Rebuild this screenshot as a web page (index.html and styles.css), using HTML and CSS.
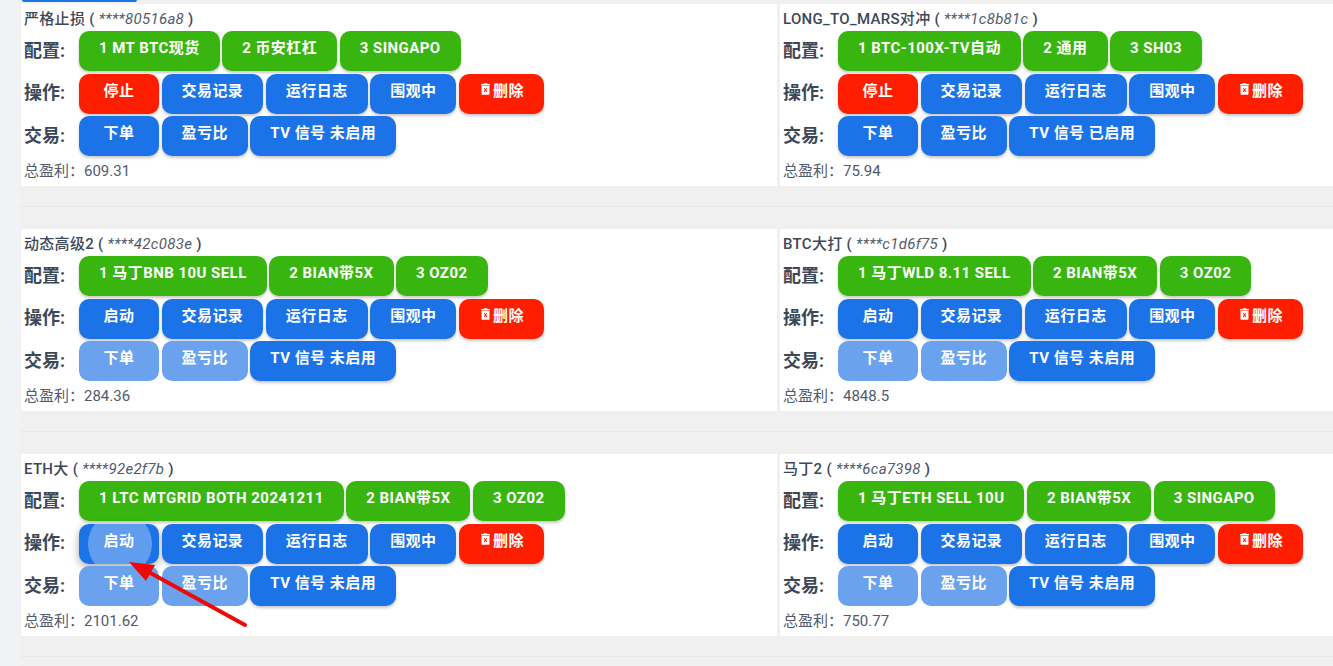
FILE: index.html
```html
<!DOCTYPE html>
<html lang="zh">
<head>
<meta charset="utf-8">
<title>策略列表</title>
<link rel="stylesheet" href="styles.css">
</head>
<body>
<svg class="defs" width="0" height="0"><symbol id="trash" viewBox="0 0 10 13"><path fill="#fff" fill-rule="evenodd" d="M3 0h4v1h3v1.400H0V1h3zM.6 3h8.800v9a1 1 0 0 1-1 1H1.600a1 1 0 0 1-1-1zM3 6l1.400 1.700L3 9.400l.8.700L5 8.600l1.200 1.500.8-.7-1.400-1.700L7 6l-.8-.7L5 6.800 3.800 5.300z"/></symbol></svg>
<main class="content">
  <div class="top-edge"><span class="top-btn"></span></div>
  <section class="pair">
    <article class="card">
      <h3 class="title">严格止损 ( <em>****80516a8</em> )</h3>
      <div class="row"><b class="label">配置:</b><button class="btn green">1 MT BTC现货</button><button class="btn green">2 币安杠杠</button><button class="btn green">3 SINGAPO</button></div>
      <div class="row"><b class="label">操作:</b><button class="btn red">停止</button><button class="btn">交易记录</button><button class="btn">运行日志</button><button class="btn">围观中</button><button class="btn red del"><svg class="ico"><use href="#trash"/></svg>删除</button></div>
      <div class="row trade"><b class="label">交易:</b><button class="btn">下单</button><button class="btn">盈亏比</button><button class="btn">TV 信号 未启用</button></div>
      <p class="profit">总盈利：609.31</p>
    </article>
    <article class="card">
      <h3 class="title">LONG_TO_MARS对冲 ( <em>****1c8b81c</em> )</h3>
      <div class="row"><b class="label">配置:</b><button class="btn green">1 BTC-100X-TV自动</button><button class="btn green">2 通用</button><button class="btn green">3 SH03</button></div>
      <div class="row"><b class="label">操作:</b><button class="btn red">停止</button><button class="btn">交易记录</button><button class="btn">运行日志</button><button class="btn">围观中</button><button class="btn red del"><svg class="ico"><use href="#trash"/></svg>删除</button></div>
      <div class="row trade"><b class="label">交易:</b><button class="btn">下单</button><button class="btn">盈亏比</button><button class="btn">TV 信号 已启用</button></div>
      <p class="profit">总盈利：75.94</p>
    </article>
  </section>
  <hr class="rule">
  <section class="pair">
    <article class="card">
      <h3 class="title">动态高级2 ( <em>****42c083e</em> )</h3>
      <div class="row"><b class="label">配置:</b><button class="btn green">1 马丁BNB 10U SELL</button><button class="btn green">2 BIAN带5X</button><button class="btn green">3 OZ02</button></div>
      <div class="row"><b class="label">操作:</b><button class="btn">启动</button><button class="btn">交易记录</button><button class="btn">运行日志</button><button class="btn">围观中</button><button class="btn red del"><svg class="ico"><use href="#trash"/></svg>删除</button></div>
      <div class="row trade"><b class="label">交易:</b><button class="btn off">下单</button><button class="btn off">盈亏比</button><button class="btn">TV 信号 未启用</button></div>
      <p class="profit">总盈利：284.36</p>
    </article>
    <article class="card">
      <h3 class="title">BTC大打 ( <em>****c1d6f75</em> )</h3>
      <div class="row"><b class="label">配置:</b><button class="btn green">1 马丁WLD 8.11 SELL</button><button class="btn green">2 BIAN带5X</button><button class="btn green">3 OZ02</button></div>
      <div class="row"><b class="label">操作:</b><button class="btn">启动</button><button class="btn">交易记录</button><button class="btn">运行日志</button><button class="btn">围观中</button><button class="btn red del"><svg class="ico"><use href="#trash"/></svg>删除</button></div>
      <div class="row trade"><b class="label">交易:</b><button class="btn off">下单</button><button class="btn off">盈亏比</button><button class="btn">TV 信号 未启用</button></div>
      <p class="profit">总盈利：4848.5</p>
    </article>
  </section>
  <hr class="rule">
  <section class="pair">
    <article class="card">
      <h3 class="title">ETH大 ( <em>****92e2f7b</em> )</h3>
      <div class="row"><b class="label">配置:</b><button class="btn green">1 LTC MTGRID BOTH 20241211</button><button class="btn green">2 BIAN带5X</button><button class="btn green">3 OZ02</button></div>
      <div class="row"><b class="label">操作:</b><button class="btn pressed"><span class="ripple"></span><span class="btn-text">启动</span></button><button class="btn">交易记录</button><button class="btn">运行日志</button><button class="btn">围观中</button><button class="btn red del"><svg class="ico"><use href="#trash"/></svg>删除</button></div>
      <div class="row trade"><b class="label">交易:</b><button class="btn off">下单</button><button class="btn off">盈亏比</button><button class="btn">TV 信号 未启用</button></div>
      <p class="profit">总盈利：2101.62</p>
    </article>
    <article class="card">
      <h3 class="title">马丁2 ( <em>****6ca7398</em> )</h3>
      <div class="row"><b class="label">配置:</b><button class="btn green">1 马丁ETH SELL 10U</button><button class="btn green">2 BIAN带5X</button><button class="btn green">3 SINGAPO</button></div>
      <div class="row"><b class="label">操作:</b><button class="btn">启动</button><button class="btn">交易记录</button><button class="btn">运行日志</button><button class="btn">围观中</button><button class="btn red del"><svg class="ico"><use href="#trash"/></svg>删除</button></div>
      <div class="row trade"><b class="label">交易:</b><button class="btn off">下单</button><button class="btn off">盈亏比</button><button class="btn">TV 信号 未启用</button></div>
      <p class="profit">总盈利：750.77</p>
    </article>
  </section>
  <hr class="rule">
</main>
<svg class="arrow" width="1333" height="666" viewBox="0 0 1333 666"><path d="M245 625 145 570" fill="none" stroke="#f00808" stroke-width="4" stroke-linecap="round"/><path d="M129 562 155 565 146 581z" fill="#f00808"/></svg>
</body>
</html>
```
FILE: styles.css
```css
* { box-sizing: border-box; }
html, body { margin: 0; height: 666px; overflow: hidden; }
body {
  background: #f0f2f5;
  font-family: Roboto, "Noto Sans CJK SC", sans-serif;
  color: #515a6e;
  padding-left: 20px;
  position: relative;
}
.defs { position: absolute; }
.content { background: #f0f0f1; height: 666px; }
.top-edge { height: 4px; padding-left: 2px; }
.top-btn { display: block; width: 115px; height: 2px; background: #1c73e8; border-radius: 0 0 6px 6px; }
.pair { display: grid; grid-template-columns: 756px 553px; column-gap: 3px; padding-left: 1px; }
.card { background: #fff; height: 182px; padding: 5px 3px 0; }
.title { margin: 0; font-size: 15px; font-weight: 500; letter-spacing: .3px; line-height: 20px; color: #3c4858; white-space: nowrap; }
.title em { font-weight: 400; color: #515a6e; }
.row { display: flex; align-items: flex-start; height: 40px; margin-top: 2px; }
.row + .row { margin-top: 3px; }
.row.trade { margin-top: 2px; }
.label { width: 55px; flex: none; font-size: 18px; font-weight: 700; line-height: 40px; color: #3c4858; }
.row:nth-child(3) .label { line-height: 38px; }
.btn {
  position: relative;
  overflow: hidden;
  height: 40px;
  min-width: 80px;
  margin-right: 2.5px;
  padding: 0 20px 6px;
  border: 0;
  border-radius: 10px;
  background: #1c73e8;
  color: #fff;
  font: 700 15px/20px Roboto, "Noto Sans CJK SC", sans-serif;
  letter-spacing: .45px;
  white-space: nowrap;
  box-shadow: 0 2px 3px rgba(0, 0, 0, .22);
}
.green { background: #38b60f; }
.red { background: #ff1e00; }
.off { background: #6aa2ee; box-shadow: none; }
.ico { width: 9px; height: 12px; margin: 0 3px 0 2px; vertical-align: 1px; }
.pressed { box-shadow: 0 3px 8px rgba(0, 0, 0, .35); }
.ripple {
  position: absolute;
  left: 9px;
  top: -12px;
  width: 64px;
  height: 64px;
  border-radius: 50%;
  background: rgba(255, 255, 255, .3);
}
.btn-text { position: relative; }
.profit { margin: 5px 0 0; font-size: 15px; line-height: 20px; color: #515a6e; }
.rule { height: 1px; margin: 20px 0 22px; border: 0; background: #e8e8e9; }
.arrow { position: absolute; left: 0; top: 0; pointer-events: none; }
```
